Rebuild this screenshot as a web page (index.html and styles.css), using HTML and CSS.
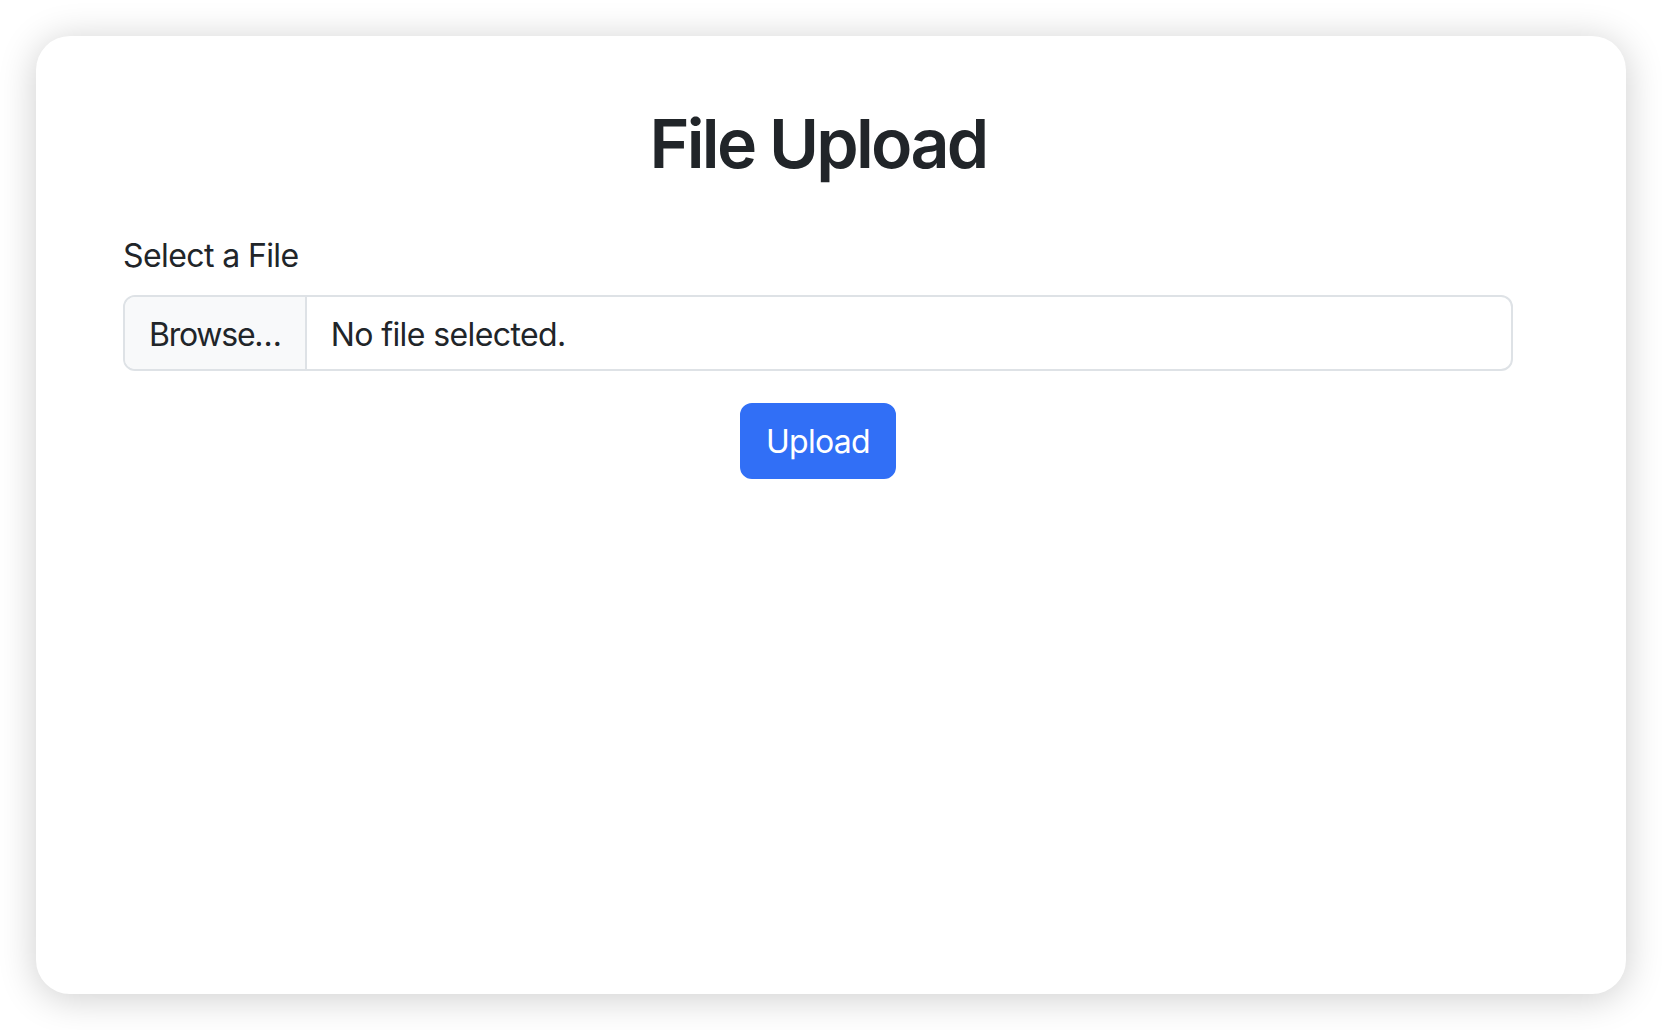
FILE: index.html
```html
<!DOCTYPE html>
<html lang="en">
<head>
<meta charset="utf-8">
<title>File Upload</title>
<link rel="stylesheet" href="styles.css">
</head>
<body>
  <div class="card">
    <div class="content">
      <h1 class="title">File Upload</h1>
      <label class="label" for="file">Select a File</label>
      <div class="file-input" id="file">
        <span class="browse">Browse…</span>
        <span class="filename">No file selected.</span>
      </div>
      <div class="actions">
        <button class="btn" type="button">Upload</button>
      </div>
    </div>
  </div>
</body>
</html>
```

FILE: styles.css
```css
* { box-sizing: border-box; }

html, body {
  margin: 0;
  height: 1030px;
  overflow: hidden;
  background: #ffffff;
}

body {
  padding: 36px;
  font-family: Inter, "Liberation Sans", sans-serif;
  color: #212529;
}

.card {
  height: 958px;
  background: #ffffff;
  border-radius: 34px;
  box-shadow: 0 4px 38px rgba(0, 0, 0, 0.2);
  padding: 66px 113px 0 87px;
}

.content {
  display: flex;
  flex-direction: column;
}

.title {
  margin: 0 0 47px;
  font-size: 68px;
  line-height: 83px;
  font-weight: 600;
  text-align: center;
  letter-spacing: -2.7px;
}

.label {
  display: block;
  font-size: 32px;
  line-height: 48px;
  letter-spacing: -0.6px;
  margin-bottom: 15px;
}

.file-input {
  display: flex;
  align-items: stretch;
  border: 2px solid #dee2e6;
  border-radius: 12px;
  overflow: hidden;
  font-size: 32px;
  line-height: 48px;
}

.browse {
  background: #f8f9fa;
  padding: 14px 24px 10px;
  border-right: 2px solid #dee2e6;
  letter-spacing: -1.25px;
}

.filename {
  padding: 14px 24px 10px;
  letter-spacing: -0.6px;
}

.actions {
  display: flex;
  justify-content: center;
  margin-top: 32px;
}

.btn {
  font-family: inherit;
  font-size: 32px;
  line-height: 48px;
  letter-spacing: -0.7px;
  color: #ffffff;
  background: #316ff6;
  border: 2px solid #316ff6;
  border-radius: 12px;
  padding: 13px 24px 11px;
  cursor: pointer;
}
```
